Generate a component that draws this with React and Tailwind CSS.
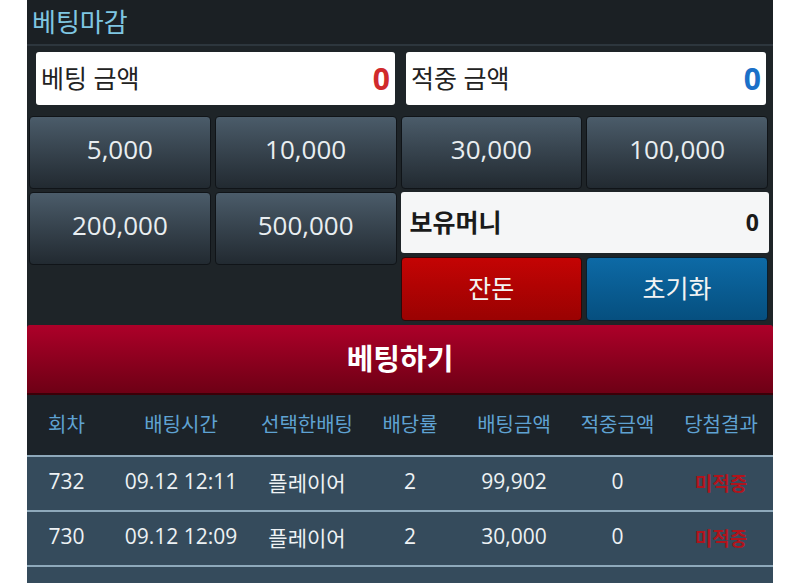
import React from "react";

const amounts1 = ["5,000", "10,000", "30,000", "100,000"];
const amounts2 = ["200,000", "500,000"];

const btn =
  "flex items-center justify-center rounded-[4px] border border-[#101418] bg-gradient-to-b from-[#4b5c6a] to-[#222a31] pb-[6px] text-[26px] text-[#e9eef1]";

const cols = "grid grid-cols-[79px_150px_102px_104px_104px_103px_104px]";

const rows = [
  ["732", "09.12 12:11", "플레이어", "2", "99,902", "0"],
  ["730", "09.12 12:09", "플레이어", "2", "30,000", "0"],
];

export default function App() {
  return (
    <div className="h-[583px] w-full overflow-hidden bg-white [font-family:'Open_Sans','Noto_Sans_CJK_KR',sans-serif]">
      <div className="mx-auto w-[746px] bg-[#1e2428]">
        <div className="flex h-[44px] items-center bg-[#1b2024] pl-[5px] text-[26px] text-[#7fc6e2]">
          베팅마감
        </div>
        <div className="h-[2px] bg-[#2d363d]" />

        <div className="grid grid-cols-2 pt-[6px]">
          <div className="pl-[9px] pr-[5px]">
            <div className="flex h-[53px] items-center justify-between rounded-[3px] bg-white px-[5px]">
              <span className="text-[25px] text-[#222]">베팅 금액</span>
              <span className="text-[30px] font-bold text-[#d02a2c]">0</span>
            </div>
          </div>
          <div className="pl-[6px] pr-[7px]">
            <div className="flex h-[53px] items-center justify-between rounded-[3px] bg-white px-[5px]">
              <span className="text-[25px] text-[#222]">적중 금액</span>
              <span className="text-[30px] font-bold text-[#1a70c8]">0</span>
            </div>
          </div>
        </div>

        <div className="pl-[2px] pr-[5px] pt-[11px]">
          <div className="grid grid-cols-4 gap-[4px]">
            {amounts1.map((a) => (
              <div key={a} className={`${btn} h-[73px]`}>
                {a}
              </div>
            ))}
          </div>
          <div className="mt-[3px] grid grid-cols-4 gap-[4px]">
            {amounts2.map((a) => (
              <div key={a} className={`${btn} h-[73px]`}>
                {a}
              </div>
            ))}
            <div className="col-span-2 flex flex-col gap-[4px]">
              <div className="mr-[-1px] flex h-[61px] items-center justify-between rounded-[3px] bg-[#f5f6f7] pl-[9px] pr-[10px]">
                <span className="text-[25px] font-bold text-[#1a1a1a]">보유머니</span>
                <span className="text-[23px] font-bold text-[#1a1a1a]">0</span>
              </div>
              <div className="grid grid-cols-2 gap-[4px]">
                <div className="flex h-[64px] items-center justify-center rounded-[4px] border border-[#2a0a0a] bg-gradient-to-b from-[#c40404] to-[#9a0202] text-[25px] text-[#f3f3f3]">
                  잔돈
                </div>
                <div className="flex h-[64px] items-center justify-center rounded-[4px] border border-[#0a1e2c] bg-gradient-to-b from-[#0d6aa6] to-[#064f7f] text-[25px] text-[#f3f3f3]">
                  초기화
                </div>
              </div>
            </div>
          </div>
        </div>

        <div className="mt-[4px] flex h-[70px] items-center justify-center rounded-t-[3px] border-b-2 border-[#3a0008] bg-gradient-to-b from-[#ad0029] to-[#6e0015] text-[29px] font-bold text-white">
          베팅하기
        </div>

        <div className={`${cols} h-[60px] items-center bg-[#1c2329] text-center text-[20px] text-[#5fa2d2]`}>
          <div>회차</div>
          <div>배팅시간</div>
          <div>선택한배팅</div>
          <div>배당률</div>
          <div>배팅금액</div>
          <div>적중금액</div>
          <div>당첨결과</div>
        </div>

        {rows.map((r) => (
          <div
            key={r[0]}
            className={`${cols} h-[55px] items-center border-t-2 border-[#8ea9bb] bg-[#354b5c] pb-[4px] text-center text-[21px] text-[#eef2f4]`}
          >
            <div>{r[0]}</div>
            <div>{r[1]}</div>
            <div className="pt-[5px]">{r[2]}</div>
            <div>{r[3]}</div>
            <div>{r[4]}</div>
            <div>{r[5]}</div>
            <div className="pt-[5px] text-[19px] font-bold text-[#b0141c]">미적중</div>
          </div>
        ))}
        <div className="h-[40px] border-t-2 border-[#8ea9bb] bg-[#354b5c]" />
      </div>
    </div>
  );
}
